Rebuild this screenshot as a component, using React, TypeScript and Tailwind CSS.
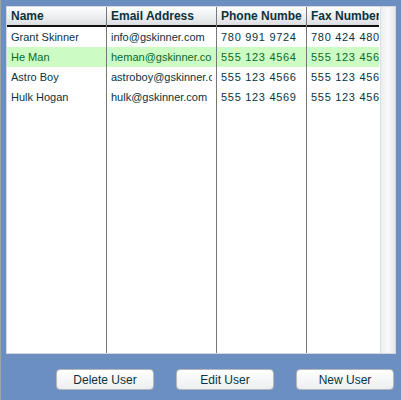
const users = [
  { name: 'Grant Skinner', email: 'info@gskinner.com', phone: '780 991 9724', fax: '780 424 4800' },
  { name: 'He Man', email: 'heman@gskinner.com', phone: '555 123 4564', fax: '555 123 4565' },
  { name: 'Astro Boy', email: 'astroboy@gskinner.com', phone: '555 123 4566', fax: '555 123 4567' },
  { name: 'Hulk Hogan', email: 'hulk@gskinner.com', phone: '555 123 4569', fax: '555 123 4560' },
]

const cols = [
  { key: 'name', label: 'Name', w: 'w-[100px]', pad: 'px-[4px]', cell: '' },
  { key: 'email', label: 'Email Address', w: 'w-[110px]', pad: 'px-[4px]', cell: '' },
  { key: 'phone', label: 'Phone Number', w: 'w-[90px]', pad: 'px-[4px]', cell: 'tracking-[0.7px]' },
  { key: 'fax', label: 'Fax Number', w: 'w-[72px]', pad: 'pl-[4px]', cell: 'tracking-[0.7px]' },
] as const

export default function App() {
  const selected = 1
  return (
    <div
      className="w-[401px] h-[400px] bg-[#6b8fc0] border-l border-[#9ea3a8] flex flex-col text-[#0b333c] text-[11px]"
      style={{ fontFamily: '"Liberation Sans", Arial, sans-serif' }}
    >
      <div className="mt-[6px] ml-[5px] w-[390px] h-[348px] bg-white border border-[#d4d8dc] flex overflow-hidden">
        <div className="flex flex-1 min-w-0">
          {cols.map((c, i) => (
            <div
              key={c.key}
              className={`${c.w} shrink-0 flex flex-col ${i < cols.length - 1 ? 'border-r border-[#777]' : ''} overflow-hidden`}
            >
              <div className={`h-[20px] border-b-2 border-[#111] bg-gradient-to-b from-[#ffffff] to-[#dcdfe2] font-bold text-[12px] flex items-center ${c.pad}`}>
                <span className="whitespace-nowrap overflow-hidden">{c.label}</span>
              </div>
              {users.map((u, r) => (
                <div
                  key={r}
                  className={`h-[20px] flex items-center ${c.pad} ${r === selected ? 'bg-[#ccfcc4] text-[#0a6a2a]' : ''}`}
                >
                  <span className={`whitespace-nowrap overflow-hidden ${c.cell}`}>{u[c.key]}</span>
                </div>
              ))}
            </div>
          ))}
        </div>
        <div className="w-[15px] shrink-0 bg-gradient-to-r from-[#eceef0] via-[#f8f9fa] to-[#e6e8ea] border-l border-[#dde0e3]" />
      </div>
      <div className="flex mt-[15px] ml-[55px] gap-[22px]">
        {['Delete User', 'Edit User', 'New User'].map((b) => (
          <button
            key={b}
            className="w-[98px] h-[21px] rounded-[4px] border border-[#b4b8bc] bg-gradient-to-b from-[#ffffff] to-[#eceef0] text-[#0b333c] text-[12px] flex items-center justify-center"
          >
            {b}
          </button>
        ))}
      </div>
    </div>
  )
}
